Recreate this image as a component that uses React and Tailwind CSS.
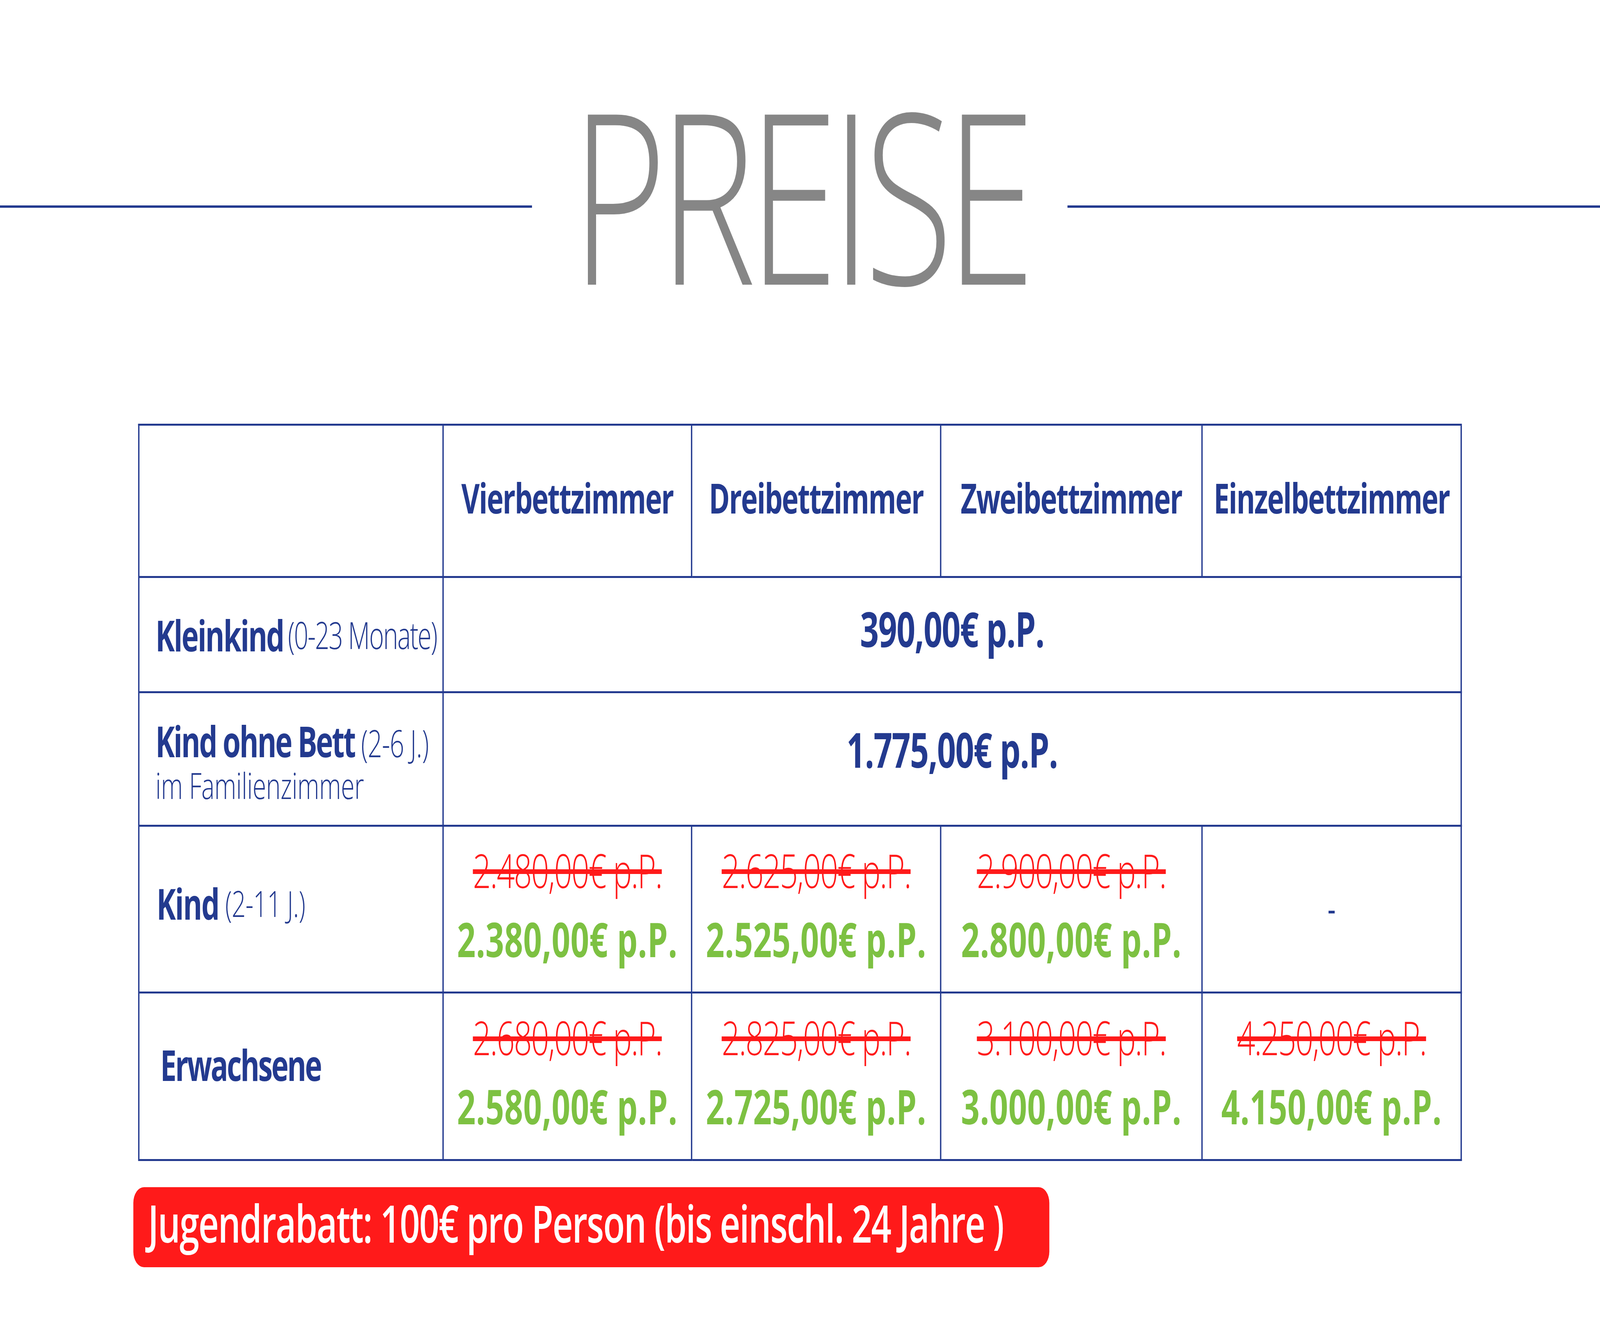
import React, { useState, useEffect } from "react";

function HeaderCell({ children }) {
  return (
    <div className="flex items-center justify-center border-r-[5px] border-b-[5px] border-[#233a8f] pb-[18px]">
      <span className="text-[106px] leading-none font-bold tracking-[-3px] text-[#233a8f] whitespace-nowrap">{children}</span>
    </div>
  );
}

function PriceCell({ old, now }) {
  return (
    <div className="flex flex-col items-center justify-center border-r-[5px] border-b-[5px] border-[#233a8f] pb-[24px]">
      <span className="text-[119px] leading-[176px] font-light tracking-[-3.5px] text-[#ff1a1a] line-through decoration-[12px] decoration-[#ff1a1a] whitespace-nowrap">
        {old}
      </span>
      <span className="text-[122px] leading-[176px] font-bold tracking-[1px] text-[#7dc142] whitespace-nowrap">{now}</span>
    </div>
  );
}

export default function App() {
  const [sx, setSx] = useState(() => (typeof window !== "undefined" ? Math.min(1, window.innerWidth / 6000) : 1));
  useEffect(() => {
    const onResize = () => setSx(Math.min(1, window.innerWidth / 6000));
    window.addEventListener("resize", onResize);
    return () => window.removeEventListener("resize", onResize);
  }, []);

  return (
    <div className="w-screen h-[3375px] overflow-hidden bg-white">
      <div
        className="w-[6000px] h-[3375px] bg-white origin-top-left font-['Open_Sans',sans-serif]"
        style={{ transform: `scaleX(${sx})` }}
      >
        {/* Title */}
        <div className="flex items-center pt-[188px]">
          <div className="w-[1995px] h-[6px] bg-[#233a8f] mt-[72px]" />
          <div className="w-[2008px] flex justify-center">
            <h1 className="text-[610px] leading-none font-light tracking-[-28px] text-[#868686]">PREISE</h1>
          </div>
          <div className="flex-1 h-[6px] bg-[#233a8f] mt-[72px]" />
        </div>

        {/* Table */}
        <div className="ml-[518px] mt-[287px] w-fit grid grid-cols-[1141px_932px_934px_980px_972px] grid-rows-[390px_295px_342px_427px_429px] border-t-[5px] border-l-[5px] border-[#233a8f]">
          <div className="border-r-[5px] border-b-[5px] border-[#233a8f]" />
          <HeaderCell>Vierbettzimmer</HeaderCell>
          <HeaderCell>Dreibettzimmer</HeaderCell>
          <HeaderCell>Zweibettzimmer</HeaderCell>
          <HeaderCell>Einzelbettzimmer</HeaderCell>

          {/* Kleinkind */}
          <div className="flex items-center pl-[60px] border-r-[5px] border-b-[5px] border-[#233a8f] whitespace-nowrap">
            <span className="text-[109px] leading-none font-bold tracking-[-4px] text-[#233a8f]">Kleinkind</span>
            <span className="ml-[16px] text-[95px] leading-none font-light tracking-[-3px] text-[#233a8f]">(0-23 Monate)</span>
          </div>
          <div className="col-span-4 flex items-center justify-center border-r-[5px] border-b-[5px] border-[#233a8f] pb-[32px]">
            <span className="text-[123px] leading-none font-bold tracking-[-2px] text-[#233a8f]">390,00€ p.P.</span>
          </div>

          {/* Kind ohne Bett */}
          <div className="flex flex-col justify-center pl-[60px] pb-[4px] border-r-[5px] border-b-[5px] border-[#233a8f] whitespace-nowrap">
            <div className="leading-[100px]">
              <span className="text-[109px] font-bold tracking-[-4.5px] text-[#233a8f]">Kind ohne Bett</span>
              <span className="text-[95px] font-light tracking-[-1px] text-[#233a8f]"> (2-6 J.)</span>
            </div>
            <div className="leading-[54px] text-[93px] font-light tracking-[-0.5px] text-[#233a8f]">im Familienzimmer</div>
          </div>
          <div className="col-span-4 flex items-center justify-center border-r-[5px] border-b-[5px] border-[#233a8f] pb-[50px]">
            <span className="text-[123px] leading-none font-bold tracking-[-2px] text-[#233a8f]">1.775,00€ p.P.</span>
          </div>

          {/* Kind */}
          <div className="flex items-center pl-[64px] pb-[32px] border-r-[5px] border-b-[5px] border-[#233a8f] whitespace-nowrap">
            <span className="text-[109px] leading-none font-bold tracking-[-3px] text-[#233a8f]">Kind</span>
            <span className="text-[93px] leading-none font-light tracking-[-1px] text-[#233a8f]">&nbsp;(2-11 J.)</span>
          </div>
          <PriceCell old="2.480,00€ p.P." now="2.380,00€ p.P." />
          <PriceCell old="2.625,00€ p.P." now="2.525,00€ p.P." />
          <PriceCell old="2.900,00€ p.P." now="2.800,00€ p.P." />
          <div className="flex items-center justify-center border-r-[5px] border-b-[5px] border-[#233a8f] pb-[8px]">
            <span className="text-[95px] leading-none font-normal text-[#233a8f]">-</span>
          </div>

          {/* Erwachsene */}
          <div className="flex items-center pl-[78px] pb-[62px] border-r-[5px] border-b-[5px] border-[#233a8f] whitespace-nowrap">
            <span className="text-[109px] leading-none font-bold tracking-[-5px] text-[#233a8f]">Erwachsene</span>
          </div>
          <PriceCell old="2.680,00€ p.P." now="2.580,00€ p.P." />
          <PriceCell old="2.825,00€ p.P." now="2.725,00€ p.P." />
          <PriceCell old="3.100,00€ p.P." now="3.000,00€ p.P." />
          <PriceCell old="4.250,00€ p.P." now="4.150,00€ p.P." />
        </div>

        {/* Banner */}
        <div className="ml-[500px] mt-[67px] w-[3435px] h-[205px] rounded-[40px] bg-[#ff1a1a] flex items-center pl-[55px] pb-[24px]">
          <span className="text-[133px] leading-none font-semibold tracking-[-3px] text-white whitespace-nowrap">
            Jugendrabatt: 100€ pro Person (bis einschl. 24 Jahre )
          </span>
        </div>
      </div>
    </div>
  );
}
